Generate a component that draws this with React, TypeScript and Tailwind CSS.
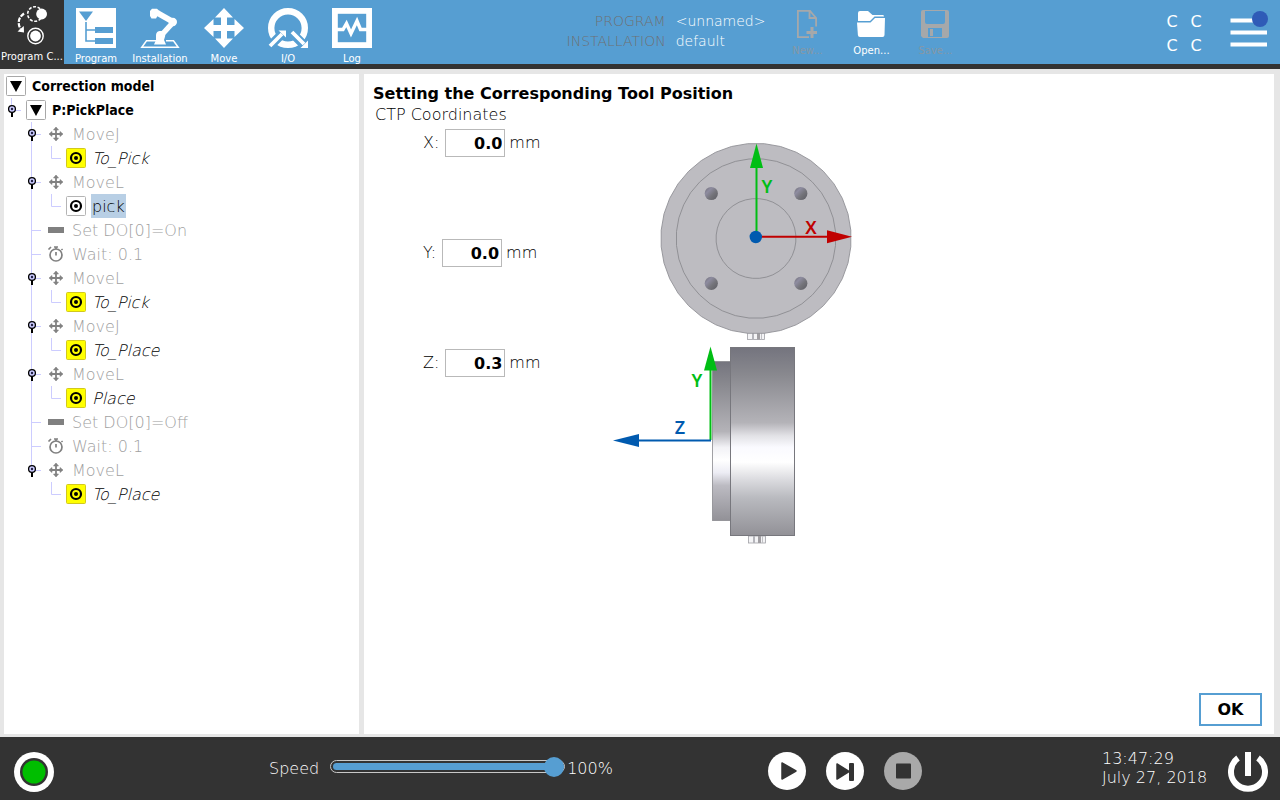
import React, { useState } from "react";

/* ---------- header icons ---------- */

const ModelIcon = () => (
  <svg width="40" height="44" viewBox="0 0 40 44" fill="none" stroke="#fff">
    <circle cx="23" cy="12" r="7.3" strokeWidth="1.6" strokeDasharray="3 1.6" />
    <circle cx="29.6" cy="12" r="5.4" fill="#fff" stroke="none" />
    <circle cx="23.5" cy="34" r="7.7" strokeWidth="1.4" />
    <circle cx="23.5" cy="34" r="5.4" fill="#fff" stroke="none" />
    <path d="M12 11.5C6 16 5.5 21 8.5 27" strokeWidth="2.2" strokeDasharray="4.5 1.2" />
    <path d="M5.5 29.500L11.800 24L12 30.500Z" fill="#fff" stroke="none" />
  </svg>
);

const ProgramIcon = () => (
  <svg width="40" height="40" viewBox="0 0 40 40">
    <rect width="40" height="40" fill="#fff" />
    <path d="M3 3.5H17L10 13Z" fill="#569ed2" />
    <path d="M10 14V33H19M10 22H19" stroke="#569ed2" strokeWidth="1.6" fill="none" />
    <rect x="19" y="19" width="18" height="6" fill="#569ed2" />
    <rect x="19" y="30" width="18" height="6" fill="#569ed2" />
  </svg>
);

const RobotIcon = () => (
  <svg width="40" height="40" viewBox="0 0 40 40">
    <path d="M16 32.8H6.5L1.8 39.2H38.2L33.5 32.8H26" fill="none" stroke="#fff" strokeWidth="1.5" />
    <path d="M14 36.5L16 32V28C16 24 18 23 20.5 23C24 23 25.5 25 25.2 28L24 32L26 36.5Z" fill="#fff" />
    <path d="M17.5 5L32.5 13.5" stroke="#fff" strokeWidth="6" />
    <path d="M33 14.5L22.5 26" stroke="#fff" strokeWidth="5.4" />
    <circle cx="32.8" cy="14" r="4.2" fill="#fff" />
    <path d="M12 .8H17L19.5 3L17.5 8L16 10.5H11.5L10 8V3Z" fill="#fff" />
  </svg>
);

const MoveIcon = () => (
  <svg width="40" height="40" viewBox="0 0 40 40" fill="#fff">
    <path d="M20 0L29 9.5H23V17H30.5V11L40 20L30.5 29V23H23V30.5H29L20 40L11 30.5H17V23H9.5V29L0 20L9.5 11V17H17V9.5H11Z" />
  </svg>
);

const IoIcon = () => (
  <svg width="40" height="40" viewBox="0 0 40 40" fill="none">
    <circle cx="20" cy="20" r="16.8" stroke="#fff" strokeWidth="6.4" />
    <path d="M0 40L16 24M22 23L40 41" stroke="#569ed2" strokeWidth="9" />
    <path d="M2 38L14 26M24 24L36 36" stroke="#fff" strokeWidth="3.8" />
    <path d="M10.5 22.5H18V29.5Z M40 32.5V40H32.5Z" fill="#fff" />
  </svg>
);

const LogIcon = () => (
  <svg width="40" height="40" viewBox="0 0 40 40" fill="none">
    <rect x="2.9" y="2.9" width="34.2" height="34.2" stroke="#fff" strokeWidth="5.8" />
    <path d="M5 21.5H11L14.5 15.5L19 25.5L25 13L28.5 21.5H35" stroke="#fff" strokeWidth="3.4" />
  </svg>
);

const NewIcon = () => (
  <svg width="28" height="28" viewBox="0 0 28 28" fill="none" stroke="#a6a8aa" strokeWidth="1.8">
    <path d="M16 27.1H4.9V.9H17L23.1 8V16.5M16.5 1V8H23" />
    <path d="M19 17V28M13.5 22.5H24" strokeWidth="3" />
  </svg>
);

const OpenIcon = () => (
  <svg width="28" height="28" viewBox="0 0 28 28" fill="#fff">
    <path d="M1 3Q1 1 3 1H11L15.5 5H26Q27 5 27 6.5H17.5L13 11H1Z" />
    <path d="M0 12.5H13.5L18 8H28L27.5 25Q27.5 27 25.5 27H3Q1 27 .9 25Z" />
  </svg>
);

const SaveIcon = () => (
  <svg width="28" height="28" viewBox="0 0 28 28">
    <path fillRule="evenodd" fill="#a6a8aa" d="M2 0H26Q28 0 28 2V26Q28 28 26 28H2L0 26V2Q0 0 2 0ZM4 1H24V12Q24 14 22 14H6Q4 14 4 12ZM7 18V27H21V18ZM9 19H12V26H9Z" />
  </svg>
);

/* ---------- program tree ---------- */

type Kind = "folder" | "move" | "point" | "output" | "wait";
type Gutter = "handle" | "branch" | "line" | "elbow" | "none";

interface Node {
  kind: Kind;
  label: string;
  gutters: Gutter[];
  last?: boolean;
  selected?: boolean;
}

const move = (label: string, last = false): Node => ({ kind: "move", label, gutters: ["none", "handle"], last });
const point = (label: string, end = false): Node => ({
  kind: "point",
  label,
  gutters: ["none", end ? "none" : "line", "elbow"],
});
const step = (kind: Kind, label: string): Node => ({ kind, label, gutters: ["none", "branch"] });

const nodes: Node[] = [
  { kind: "folder", label: "Correction model", gutters: [] },
  { kind: "folder", label: "P:PickPlace", gutters: ["handle"], last: true },
  move("MoveJ"),
  point("To_Pick"),
  move("MoveL"),
  { ...point("pick"), selected: true },
  step("output", "Set DO[0]=On"),
  step("wait", "Wait: 0.1"),
  move("MoveL"),
  point("To_Pick"),
  move("MoveJ"),
  point("To_Place"),
  move("MoveL"),
  point("Place"),
  step("output", "Set DO[0]=Off"),
  step("wait", "Wait: 0.1"),
  move("MoveL", true),
  point("To_Place", true),
];

const GutterCell = ({ type, last }: { type: Gutter; last?: boolean }) => (
  <svg width="20" height="24" viewBox="0 0 20 24" fill="none" className="shrink-0" stroke="#ccccff">
    {type === "line" && <path d="M7.5 0V24" />}
    {type === "elbow" && <path d="M7.5 0V12.5H17" />}
    {(type === "branch" || type === "handle") && <path d={last ? "M7.5 0V12.5H17" : "M7.5 0V24M7.5 12.5H17"} />}
    {type === "handle" && (
      <>
        <path d="M8 14V19" stroke="#000" strokeWidth="2" />
        <circle cx="8" cy="11" r="3.4" fill="#ccccff" stroke="#000" strokeWidth="1.3" />
        <circle cx="8" cy="11" r="1.2" fill="#222244" stroke="none" />
      </>
    )}
  </svg>
);

const NodeIcon = ({ kind, selected }: { kind: Kind; selected?: boolean }) => {
  if (kind === "folder")
    return (
      <svg width="20" height="20" viewBox="0 0 20 20">
        <rect x=".5" y=".5" width="19" height="19" rx="1" fill="#fff" stroke="#a8a8a8" />
        <path d="M4 5H16L10 16Z" fill="#000" />
      </svg>
    );
  if (kind === "point")
    return (
      <svg width="20" height="20" viewBox="0 0 20 20">
        <rect x=".5" y=".5" width="19" height="19" rx="1" fill={selected ? "#fff" : "#ffff00"} stroke={selected ? "#b4b4b4" : "#d2c81e"} />
        <circle cx="10" cy="10" r="5" fill="none" stroke="#000" strokeWidth="2.2" />
        <circle cx="10" cy="10" r="2" fill="#000" />
      </svg>
    );
  if (kind === "move")
    return (
      <svg width="20" height="20" viewBox="0 0 20 20" fill="#828282" stroke="#828282">
        <path d="M10 4V16M4 10H16" strokeWidth="1.8" />
        <path d="M10 3L12.5 6H7.5ZM10 17L12.5 14H7.5ZM3 10L6 7.5V12.5ZM17 10L14 7.5V12.5Z" strokeWidth=".6" />
      </svg>
    );
  if (kind === "output")
    return (
      <svg width="20" height="20" viewBox="0 0 20 20">
        <rect x="2" y="7" width="16" height="6" fill="#808080" />
      </svg>
    );
  return (
    <svg width="20" height="20" viewBox="0 0 20 20" fill="none" stroke="#808080">
      <circle cx="10" cy="11" r="6" strokeWidth="1.7" />
      <path d="M10 8V11.5M10 3V5M2.5 5.5L5 3M15.5 5L16.5 6" strokeWidth="1.7" />
      <path d="M8 3H12" strokeWidth="1.5" />
    </svg>
  );
};

const labelClass = (n: Node) => {
  if (n.kind === "folder") return "h-6 text-sm font-bold leading-6 text-black [font-family:'DejaVu_Sans_Condensed','DejaVu_Sans',sans-serif]";
  if (n.selected) return "-ml-px h-6 bg-[#b8cfe5] px-px text-base font-extralight leading-[26px] text-black";
  if (n.kind === "point") return "h-6 text-base font-extralight italic leading-[26px] text-black [font-family:'DejaVu_Sans_Light','DejaVu_Sans',sans-serif]";
  return "h-6 text-base font-extralight leading-[26px] text-[#a0a0a0]";
};

const ProgramTree = () => (
  <ul className="w-[355px] shrink-0 bg-white" aria-label="Program tree">
    {nodes.map((n, i) => (
      <li key={i} className="flex h-6 items-center">
        {n.gutters.map((g, j) => (
          <GutterCell key={j} type={g} last={n.last} />
        ))}
        <span className="ml-0.5 mr-1.5 shrink-0">
          <NodeIcon kind={n.kind} selected={n.selected} />
        </span>
        <span className={labelClass(n)}>{n.label}</span>
      </li>
    ))}
  </ul>
);

/* ---------- tool flange drawing ---------- */

const facets = (cx: number, cy: number, r: number, n: number) =>
  Array.from({ length: n }, (_, i) => {
    const a = ((i + 0.5) * 2 * Math.PI) / n;
    return `${(cx + r * Math.cos(a)).toFixed(1)},${(cy + r * Math.sin(a)).toFixed(1)}`;
  }).join(" ");

const Connector = ({ x, y }: { x: number; y: number }) => (
  <g>
    <rect x={x + 0.5} y={y} width="17" height="7" fill="#f4f4f6" stroke="#a0a0a6" strokeWidth=".8" />
    <rect x={x + 5} y={y} width="2" height="7" fill="#b4b4ba" />
    <rect x={x + 10} y={y} width="3" height="7" fill="#a09ea2" />
    <rect x={x + 14} y={y} width="1" height="7" fill="#c0c0c4" />
  </g>
);

const FlangeDrawing = () => (
  <svg width="240" height="404" viewBox="612 140 240 404" role="img" aria-label="Tool flange axes">
    <defs>
      <linearGradient id="body" x1="0" y1="0" x2="0" y2="1">
        <stop offset="0" stopColor="#74747e" />
        <stop offset=".14" stopColor="#88888e" />
        <stop offset=".4" stopColor="#b4b3b8" />
        <stop offset=".47" stopColor="#e2e2e6" />
        <stop offset=".53" stopColor="#fafaff" />
        <stop offset=".61" stopColor="#ffffff" />
        <stop offset=".7" stopColor="#dcdce0" />
        <stop offset=".8" stopColor="#b9babf" />
        <stop offset="1" stopColor="#929197" />
      </linearGradient>
      <linearGradient id="neck" x1="0" y1="0" x2="0" y2="1">
        <stop offset="0" stopColor="#74747e" />
        <stop offset=".14" stopColor="#88888e" />
        <stop offset=".44" stopColor="#b4b3b8" />
        <stop offset=".54" stopColor="#f2f2f6" />
        <stop offset=".62" stopColor="#ffffff" />
        <stop offset=".7" stopColor="#ececf4" />
        <stop offset=".78" stopColor="#bcbbc2" />
        <stop offset="1" stopColor="#929197" />
      </linearGradient>
      <linearGradient id="hole" x1="0" y1="0" x2="1" y2="1">
        <stop offset="0" stopColor="#6c6b73" />
        <stop offset=".3" stopColor="#8e8ca0" />
        <stop offset=".6" stopColor="#74747a" />
        <stop offset="1" stopColor="#5c5c63" />
      </linearGradient>
    </defs>
    <Connector x={747} y={332.5} />
    <polygon points={facets(756, 238.5, 95.2, 36)} fill="#bdbcc1" stroke="#919196" strokeWidth=".9" />
    <polygon points={facets(756, 238.5, 79.8, 36)} fill="none" stroke="#8b8b90" strokeWidth=".9" />
    <polygon points={facets(756, 238.5, 40, 36)} fill="none" stroke="#8b8b90" strokeWidth=".9" />
    {[711.3, 800.8].map((x) =>
      [193.5, 283.3].map((y) => <circle key={`${x}-${y}`} cx={x} cy={y} r="6.6" fill="url(#hole)" />)
    )}
    <path d="M756.5 237V166" stroke="#00be14" strokeWidth="2" />
    <path d="M756.5 143.5L763 168H750Z" fill="#00be14" />
    <path d="M756 236.7H828" stroke="#c00000" strokeWidth="2" />
    <path d="M852 236.7L827 230.2V243.2Z" fill="#c00000" />
    <circle cx="755.8" cy="237" r="6.2" fill="#005aaf" />

    <Connector x={748} y={536} />
    <rect x="712.5" y="361.5" width="19" height="159" fill="url(#neck)" stroke="#8a8a90" strokeWidth=".8" />
    <rect x="730.5" y="347.5" width="64" height="188" fill="url(#body)" stroke="#77777d" />
    <path d="M710.5 440V368" stroke="#00be14" strokeWidth="2" />
    <path d="M710.5 346.5L717 370.5H704Z" fill="#00be14" />
    <path d="M711 440.5H637" stroke="#005aaf" strokeWidth="2" />
    <path d="M613 440.5L639 434V447Z" fill="#005aaf" />
    <g className="text-lg font-semibold [font-family:'Noto_Sans',sans-serif]" textAnchor="middle">
      <text x="767" y="193" fill="#00be14">Y</text>
      <text x="811" y="234" fill="#c00000">X</text>
      <text x="697" y="387" fill="#00be14">Y</text>
      <text x="680" y="434" fill="#005aaf">Z</text>
    </g>
  </svg>
);

const Coordinate = ({ axis, initial }: { axis: string; initial: string }) => {
  const [value, setValue] = useState(initial);
  return (
    <label className="flex h-7 items-center text-base font-extralight">
      {axis}:
      <input
        className="ml-1.5 mr-1 h-7 w-[60px] border border-[#b9b9b9] bg-white pr-0.5 text-right font-bold text-black outline-none"
        value={value}
        onChange={(e) => setValue(e.target.value)}
      />
      mm
    </label>
  );
};

/* ---------- page ---------- */

const tabs = [
  { label: "Program", icon: <ProgramIcon /> },
  { label: "Installation", icon: <RobotIcon /> },
  { label: "Move", icon: <MoveIcon /> },
  { label: "I/O", icon: <IoIcon /> },
  { label: "Log", icon: <LogIcon /> },
];

const files = [
  { label: "New...", icon: <NewIcon />, off: true },
  { label: "Open...", icon: <OpenIcon />, off: false },
  { label: "Save...", icon: <SaveIcon />, off: true },
];

const Header = () => (
  <header className="flex h-[69px] shrink-0 items-start border-b-[5px] border-[#333333] bg-[#569ed2] text-white">
    <nav className="flex">
      <button className="flex h-16 w-16 flex-col items-center bg-[#333333] pt-0.5 text-[10px] leading-[10px]">
        <ModelIcon />
        <span className="mt-1.5 whitespace-nowrap">Program C...</span>
      </button>
      {tabs.map((t) => (
        <button key={t.label} className="flex h-16 w-16 flex-col items-center pt-2 text-[10px] leading-[10px]">
          {t.icon}
          <span className="mt-1.5">{t.label}</span>
        </button>
      ))}
    </nav>
    <div className="flex flex-1 justify-center pr-2.5">
      <dl className="grid grid-cols-[auto_auto] content-start gap-x-2.5 pt-[11px] text-sm font-extralight leading-5">
        <dt className="text-right text-[#6e7072]">PROGRAM</dt>
        <dd>&lt;unnamed&gt;</dd>
        <dt className="text-right text-[#6e7072]">INSTALLATION</dt>
        <dd>default</dd>
      </dl>
      <div className="ml-2.5 flex">
        {files.map((f) => (
          <button
            key={f.label}
            disabled={f.off}
            className="flex h-16 w-16 flex-col items-center pt-2.5 text-[10px] leading-[10px] disabled:text-[#8598a6]"
          >
            {f.icon}
            <span className="mt-2">{f.label}</span>
          </button>
        ))}
      </div>
    </div>
    <div className="grid w-12 grid-cols-2 pt-2.5 text-center text-base leading-6">
      <span>C</span>
      <span>C</span>
      <span>C</span>
      <span>C</span>
    </div>
    <button aria-label="Menu" className="ml-5 mr-2.5 pt-2">
      <svg width="42" height="44" viewBox="0 0 42 44">
        <path d="M2.5 12.5H39M2.5 24.5H39M2.5 36.5H39" stroke="#fff" strokeWidth="4" />
        <circle cx="32" cy="11" r="8" fill="#2f5bb7" />
      </svg>
    </button>
  </header>
);

const Footer = () => {
  const [speed, setSpeed] = useState(100);
  return (
    <footer className="grid h-[63px] shrink-0 grid-cols-[269fr_499fr_334fr_178fr] items-center bg-[#333333] text-base font-extralight text-white">
      <button aria-label="Robot status" className="ml-3.5 mt-1.5 w-10">
        <svg width="40" height="40" viewBox="0 0 40 40">
          <circle cx="20" cy="20" r="20" fill="#fff" />
          <circle cx="20" cy="20" r="14" fill="#333" />
          <circle cx="20" cy="20" r="11.5" fill="#00be00" />
        </svg>
      </button>
      <div className="flex items-center">
        <label htmlFor="speed">Speed</label>
        <input
          id="speed"
          type="range"
          min="0"
          max="100"
          value={speed}
          onChange={(e) => setSpeed(Number(e.target.value))}
          className="mb-1 ml-[11px] mr-0.5 h-[13px] w-[235px] appearance-none rounded-full border border-[#c8c8c8] bg-[#569ed2] bg-clip-content py-0.5 pl-0.5 [&::-webkit-slider-thumb]:h-5 [&::-webkit-slider-thumb]:w-5 [&::-webkit-slider-thumb]:appearance-none [&::-webkit-slider-thumb]:rounded-full [&::-webkit-slider-thumb]:bg-[#569ed2]"
        />
        <output htmlFor="speed">{speed}%</output>
      </div>
      <div className="mt-1 flex gap-5">
        <button aria-label="Play">
          <svg width="38" height="38" viewBox="0 0 38 38">
            <circle cx="19" cy="19" r="19" fill="#fff" />
            <path d="M14 11L28 19L14 27Z" fill="#333" stroke="#333" strokeWidth="1.5" strokeLinejoin="round" />
          </svg>
        </button>
        <button aria-label="Step">
          <svg width="38" height="38" viewBox="0 0 38 38">
            <circle cx="19" cy="19" r="19" fill="#fff" />
            <path d="M11 12L23 19.5L11 27Z" fill="#333" stroke="#333" strokeWidth="1.5" strokeLinejoin="round" />
            <rect x="23" y="11" width="5" height="18" rx="1" fill="#333" />
          </svg>
        </button>
        <button aria-label="Stop" disabled>
          <svg width="38" height="38" viewBox="0 0 38 38">
            <circle cx="19" cy="19" r="19" fill="#a9a9a9" />
            <rect x="12" y="11.5" width="15" height="15" rx=".8" fill="#333" />
          </svg>
        </button>
      </div>
      <div className="flex items-center justify-between pr-3">
        <p className="mb-0.5 whitespace-nowrap leading-[19px]">
          <time>13:47:29</time>
          <br />
          <time>July 27, 2018</time>
        </p>
        <button aria-label="Power" className="mt-1.5">
          <svg width="40" height="40" viewBox="0 0 40 40" fill="none" stroke="#fff" strokeWidth="6">
            <path d="M10 6A17 17 0 1 0 30 6" />
            <path d="M20 0V24" />
          </svg>
        </button>
      </div>
    </footer>
  );
};

export default function App() {
  return (
    <div className="flex min-h-screen flex-col bg-[#e6e6e6] [font-family:'DejaVu_Sans',sans-serif]">
      <Header />
      <main className="flex flex-1 gap-[5px] pb-[3px] pl-1 pr-1.5 pt-[5px]">
        <ProgramTree />
        <section className="flex flex-1 flex-col bg-white pl-[9px]">
          <h1 className="mt-2 text-base font-bold leading-6">Setting the Corresponding Tool Position</h1>
          <h2 className="pl-0.5 text-base font-extralight leading-[18px]">CTP Coordinates</h2>
          <div className="flex items-start pl-[50px]">
            <div className="mt-[5px] flex w-[189px] flex-col gap-[82px]">
              <Coordinate axis="X" initial="0.0" />
              <Coordinate axis="Y" initial="0.0" />
              <Coordinate axis="Z" initial="0.3" />
            </div>
            <div className="mt-4">
              <FlangeDrawing />
            </div>
          </div>
          <button className="mb-2 mr-3 mt-auto h-[33px] w-[63px] self-end border-2 border-[#569ed2] bg-white text-base font-bold">
            OK
          </button>
        </section>
      </main>
      <Footer />
    </div>
  );
}
